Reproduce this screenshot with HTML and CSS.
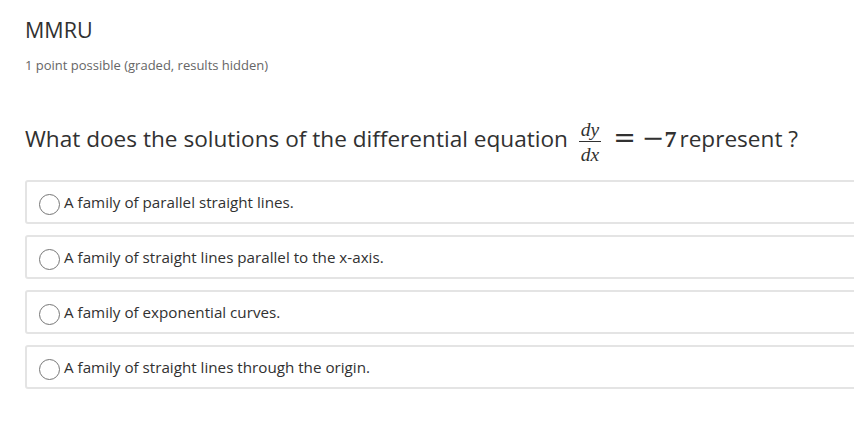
FILE: index.html
```html
<!DOCTYPE html>
<html lang="en">
<head>
<meta charset="utf-8">
<title>MMRU</title>
<link rel="stylesheet" href="styles.css">
</head>
<body>
<div class="problem">
  <h3 class="title">MMRU</h3>
  <div class="meta">1 point possible (graded, results hidden)</div>
  <p class="question">What does the solutions of the differential equation <span class="math"><span class="frac"><span class="num">dy</span><span class="bar"></span><span class="den">dx</span></span><span class="eq">=</span><span class="minus">−</span><span class="seven">7</span></span>represent ?</p>
  <div class="options">
    <label class="option"><span class="radio"></span><span class="otext">A family of parallel straight lines.</span></label>
    <label class="option"><span class="radio"></span><span class="otext">A family of straight lines parallel to the x-axis.</span></label>
    <label class="option"><span class="radio"></span><span class="otext">A family of exponential curves.</span></label>
    <label class="option"><span class="radio"></span><span class="otext">A family of straight lines through the origin.</span></label>
  </div>
</div>
</body>
</html>
```
FILE: styles.css
```css
html, body {
  margin: 0;
  padding: 0;
  overflow: hidden;
  background: #ffffff;
}
body {
  font-family: "Open Sans", "Noto Sans", sans-serif;
  color: #313131;
}
.problem {
  padding: 16px 0 0 25px;
}
.title {
  margin: 0;
  font-size: 21.5px;
  font-weight: 400;
  line-height: 28px;
  color: #313131;
}
.meta {
  margin-top: 12px;
  font-size: 13px;
  line-height: 18px;
  color: #666666;
}
.question {
  margin: 47px 0 0 0;
  font-size: 22.6px;
  line-height: 30px;
  color: #313131;
}
.math {
  font-family: "Liberation Serif", "Times New Roman", serif;
  margin-left: 4px;
}
.frac {
  display: inline-flex;
  flex-direction: column;
  align-items: center;
  vertical-align: middle;
  font-style: italic;
  font-size: 19.5px;
  line-height: 17px;
  padding: 0 1px;
}
.num, .den {
  display: block;
  padding: 0 2px;
}
.bar {
  display: block;
  width: 100%;
  height: 1px;
  background: #313131;
  margin: 3px 0 4px 0;
}
.eq, .minus {
  font-family: "DejaVu Serif", serif;
  font-size: 27px;
}
.eq {
  margin: 0 6px 0 11px;
}
.seven {
  font-size: 24px;
  font-weight: 700;
  margin-right: 3px;
}
.options {
  margin-top: 17px;
  margin-right: -20px;
  display: flex;
  flex-direction: column;
  gap: 11px;
}
.option {
  display: flex;
  align-items: center;
  height: 40px;
  border: 2px solid #e4e4e4;
  border-radius: 3px;
  padding-left: 12px;
  font-size: 15.2px;
  color: #313131;
}
.radio {
  box-sizing: border-box;
  width: 21px;
  height: 21px;
  border: 1px solid #767676;
  border-radius: 50%;
  margin: 5px 4px 0 0;
  flex: none;
}
```
